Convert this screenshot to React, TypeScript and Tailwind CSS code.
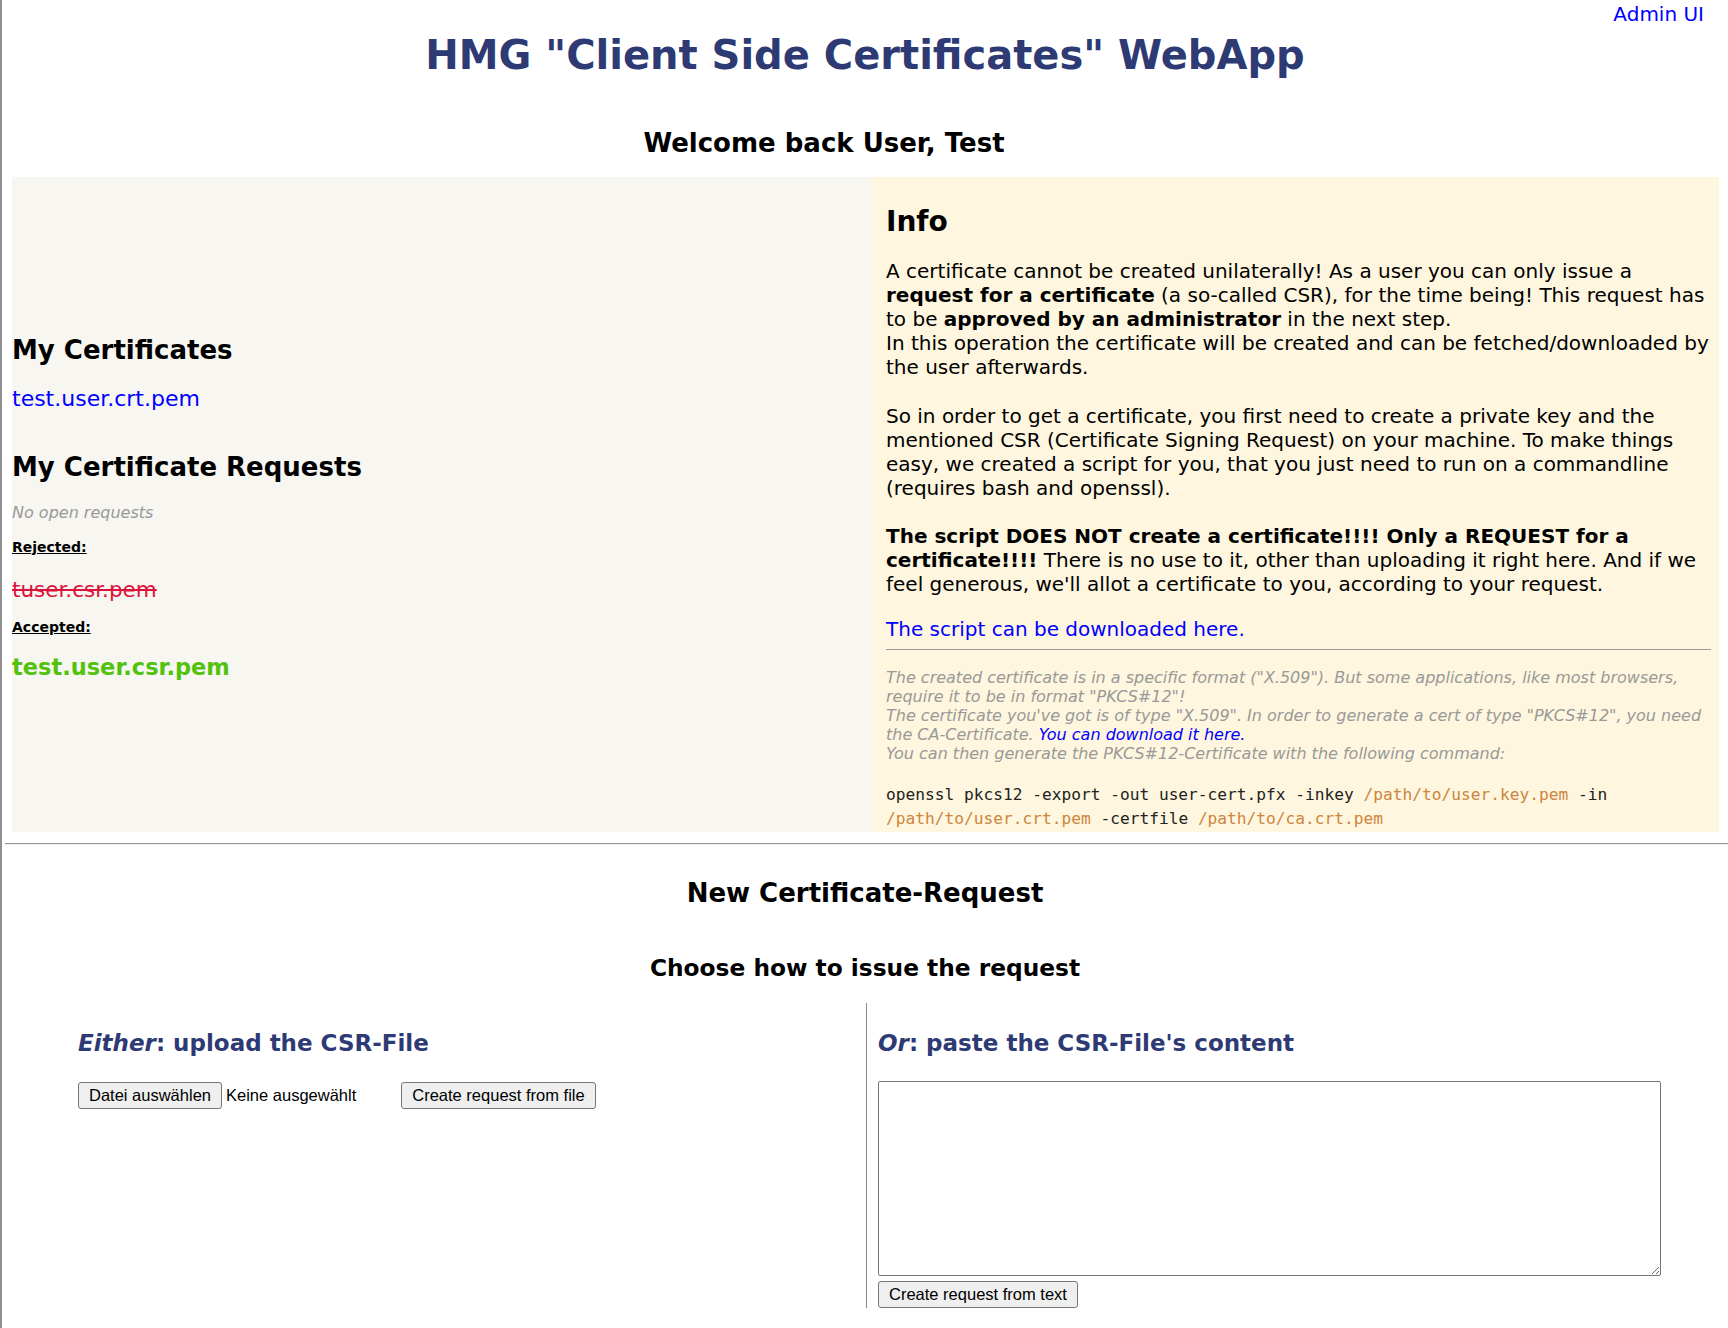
import React from "react";

function Btn({ children, className = "" }: { children: React.ReactNode; className?: string }) {
  return (
    <button
      className={
        "h-[27px] px-[10px] border border-[#767676] rounded-[3px] bg-[#efefef] font-[Liberation_Sans,Arial,sans-serif] text-[16.5px] leading-[normal] text-black " +
        className
      }
    >
      {children}
    </button>
  );
}

function Path({ children }: { children: React.ReactNode }) {
  return <span className="text-[#cd853f]">{children}</span>;
}

export default function App() {
  return (
    <div className="min-h-[1328px] bg-white border-l-2 border-[#8f8f8f] font-[DejaVu_Sans,Verdana,sans-serif] leading-[normal] text-black">
      {/* header */}
      <div className="flex justify-end pr-[24px] pt-[2px]">
        <a href="#" className="text-[20px] text-[#0000ff]">
          Admin UI
        </a>
      </div>
      <h1 className="mt-[6px] text-center text-[40px] font-bold text-[#2e3a74]">
        HMG "Client Side Certificates" WebApp
      </h1>
      <h2 className="mt-[50px] pr-[82px] text-center text-[26px] font-bold">
        Welcome back User, Test
      </h2>

      {/* panels */}
      <div className="mt-[19px] ml-[10px] mr-[9px] flex">
        <div className="w-[860px] shrink-0 bg-[#f7f6f1] flex flex-col justify-center pt-[5px]">
          <h3 className="text-[26px] font-bold">My Certificates</h3>
          <a href="#" className="mt-[21px] text-[22px] text-[#0000ff]">
            test.user.crt.pem
          </a>
          <h3 className="mt-[41px] text-[26px] font-bold">My Certificate Requests</h3>
          <p className="mt-[21px] text-[16px] italic text-[#999]">No open requests</p>
          <p className="mt-[17px] text-[14px] font-bold underline">Rejected:</p>
          <p className="mt-[22px] text-[21.5px] text-[#dc143c] line-through">tuser.csr.pem</p>
          <p className="mt-[17px] text-[14px] font-bold underline">Accepted:</p>
          <p className="mt-[19px] text-[22.5px] font-bold text-[#52c20d]">test.user.csr.pem</p>
        </div>

        <div className="flex-1 bg-[#fef6de] pt-[28px] pl-[14px] pr-[8px] pb-[1px]">
          <h2 className="text-[28px] font-bold">Info</h2>
          <div className="mt-[21px] text-[20px]">
            <p>
              A certificate cannot be created unilaterally! As a user you can only issue a{" "}
              <b>request for a certificate</b> (a so-called CSR), for the time being! This request
              has to be <b>approved by an administrator</b> in the next step.
              <br />
              In this operation the certificate will be created and can be fetched/downloaded by the
              user afterwards.
            </p>
            <p className="mt-[25px]">
              So in order to get a certificate, you first need to create a private key and the
              mentioned CSR (Certificate Signing Request) on your machine. To make things easy, we
              created a script for you, that you just need to run on a commandline (requires bash
              and openssl).
            </p>
            <p className="mt-[24px]">
              <b>The script DOES NOT create a certificate!!!! Only a REQUEST for a certificate!!!!</b>{" "}
              There is no use to it, other than uploading it right here. And if we feel generous,
              we'll allot a certificate to you, according to your request.
            </p>
            <a href="#" className="mt-[21px] block text-[#0000ff]">
              The script can be downloaded here.
            </a>
          </div>
          <hr className="mt-[8px] border-t border-[#9a9a9a]" />
          <div className="mt-[18px] text-[16px] italic text-[#999]">
            The created certificate is in a specific format ("X.509"). But some applications, like
            most browsers, require it to be in format "PKCS#12"!
            <br />
            The certificate you've got is of type "X.509". In order to generate a cert of type
            "PKCS#12", you need the CA-Certificate.{" "}
            <a href="#" className="text-[#0000ff]">
              You can download it here.
            </a>
            <br />
            You can then generate the PKCS#12-Certificate with the following command:
          </div>
          <div className="mt-[20px] font-[DejaVu_Sans_Mono,monospace] text-[16.2px] leading-[24px] text-[#222]">
            openssl pkcs12 -export -out user-cert.pfx -inkey <Path>/path/to/user.key.pem</Path> -in{" "}
            <Path>/path/to/user.crt.pem</Path> -certfile <Path>/path/to/ca.crt.pem</Path>
          </div>
        </div>
      </div>

      <hr className="mt-[11px] ml-[3px] border-t border-b border-t-[#9a9a9a] border-b-[#ececec]" />

      {/* new request */}
      <h2 className="mt-[33px] text-center text-[26px] font-bold">New Certificate-Request</h2>
      <h3 className="mt-[46px] text-center text-[23.3px] font-bold">Choose how to issue the request</h3>

      <div className="mt-[22px] flex">
        <div className="w-[864px] shrink-0 pt-[27px] pl-[76px]">
          <h3 className="text-[23px] font-bold text-[#2e3a74]">
            <i>Either</i>: upload the CSR-File
          </h3>
          <div className="mt-[26px] flex items-center">
            <Btn>Datei auswählen</Btn>
            <span className="ml-[4px] font-[Liberation_Sans,Arial,sans-serif] text-[16.5px]">
              Keine ausgewählt
            </span>
            <Btn className="ml-[45px]">Create request from file</Btn>
          </div>
        </div>
        <div className="flex-1 border-l border-[#8a8a8a] pt-[27px] pl-[11px]">
          <h3 className="text-[23px] font-bold text-[#2e3a74]">
            <i>Or</i>: paste the CSR-File's content
          </h3>
          <textarea className="mt-[25px] block w-[783px] h-[195px] border border-[#767676] rounded-[2px] bg-white" />
          <Btn className="mt-[5px] block">Create request from text</Btn>
        </div>
      </div>
    </div>
  );
}
